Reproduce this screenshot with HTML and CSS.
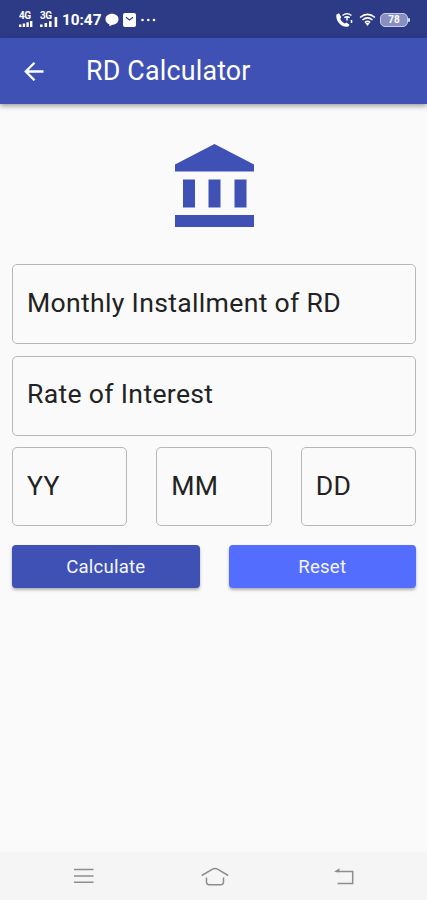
FILE: index.html
```html
<!DOCTYPE html>
<html lang="en">
<head>
<meta charset="utf-8">
<title>RD Calculator</title>
<link rel="stylesheet" href="styles.css">
</head>
<body>
<div class="screen">
  <div class="status">
    <div class="signal signal-4g">
      <span class="net">4G</span>
      <svg width="14" height="6" viewBox="0 0 14 6"><path d="M0 3.5h2.400V6H0zM3.700 2.500h2.400V6h-2.400zM7.400 1.200h2.400V6h-2.400zM11 0h2.400v6h-2.400z"/></svg>
    </div>
    <div class="signal signal-3g">
      <span class="net">3G</span>
      <svg width="18" height="10" viewBox="0 0 18 10"><path d="M0 7.500h2.600V10H0zM4.500 6h2.600v4H4.500zM9 4.300h2.600V10H9zM14.600 0h2.600v10h-2.600z"/></svg>
    </div>
    <span class="time">10:47</span>
    <svg class="bubble" width="14" height="14" viewBox="0 0 14 14"><path d="M7 .8c3.700 0 6.500 2.300 6.500 5.500S10.700 11.800 7.400 11.800L4.500 13.300 4.300 11.300C2 10.400.5 8.500.5 6.300.5 3.100 3.300.8 7 .8z"/></svg>
    <svg class="mail" width="13" height="14" viewBox="0 0 13 14"><rect width="13" height="14" rx="2"/><path class="flap" d="M3 4.200 6.500 7 10 4.200"/></svg>
    <svg class="dots" width="15" height="4" viewBox="0 0 15 4"><circle cx="1.500" cy="2" r="1.300"/><circle cx="7.300" cy="2" r="1.300"/><circle cx="13" cy="2" r="1.300"/></svg>
    <div class="status-right">
      <svg width="18" height="16" viewBox="0 0 18 16"><path d="M.5 2.500 3 1.300 5.300 5.200 4.200 6.800C5 9 6.500 10.500 8.800 11.500L10.500 10.500 13.500 12.700 12.300 14.500C6.500 16.500-1 9 .5 2.500z"/><path class="wave" d="M6.500 3.500Q11 .2 15.500 3.500M8.300 5.700Q11 3.900 13.700 5.700M11 5.500V8.500M15.500 8V11"/></svg>
      <svg width="17" height="14" viewBox="0 0 17 14"><path class="wave" d="M1 4.500Q8.500-1.800 16 4.500M3.500 7Q8.500 2.800 13.500 7M5.800 9.500Q8.500 7.200 11.200 9.500"/><path d="M6.300 10h4.400L8.500 13z"/></svg>
      <div class="battery"><span>78</span></div>
    </div>
  </div>
  <header class="appbar">
    <svg width="21" height="20" viewBox="0 0 21 20"><path d="M19.500 10.500H2M10.500 1.700 1.800 10.500l8.700 8.800"/></svg>
    <h1>RD Calculator</h1>
  </header>
  <main>
    <svg class="bank" width="80" height="84" viewBox="0 0 80 84"><path d="M0 20.500 39.500 0 79 20.500V27.500H0zM8 35.500H20V63.500H8zM33.500 35.500H45.500V63.500H33.500zM59.500 35.500H71.500V63.500H59.500zM0 71H79V83H0z"/></svg>
    <div class="field">Monthly Installment of RD</div>
    <div class="field">Rate of Interest</div>
    <div class="period">
      <div class="field">YY</div>
      <div class="field">MM</div>
      <div class="field">DD</div>
    </div>
    <div class="actions">
      <button class="calculate">Calculate</button>
      <button class="reset">Reset</button>
    </div>
  </main>
  <nav>
    <svg width="20" height="16" viewBox="0 0 20 16"><path d="M0 1.500H19.500M0 8H19.500M0 14.300H19.500"/></svg>
    <svg width="28" height="19" viewBox="0 0 28 19"><path d="M.8 8.500 11.500 2.200Q14 .8 16.500 2.200L27.200 8.500M5.500 10.500V15Q5.500 17.700 8 17.700H20Q22.500 17.700 22.500 15V10.500"/></svg>
    <svg width="20" height="17" viewBox="0 0 20 17"><path d="M2 3.500H18.700V15.500H3.500"/><path class="tip" d="M0 3.700 5.500.3V4.200z"/></svg>
  </nav>
</div>
</body>
</html>
```
FILE: styles.css
```css
* { box-sizing: border-box; }

body {
  margin: 0;
  font-family: Roboto, "Liberation Sans", sans-serif;
  background: #fafafa;
}

svg { display: block; flex: none; }

.screen {
  display: flex;
  flex-direction: column;
  width: 427px;
  height: 900px;
  overflow: hidden;
}

.status {
  display: flex;
  align-items: center;
  height: 38px;
  padding: 1px 17px 0 19px;
  background: #2d3b87;
  color: #fff;
  fill: #fff;
}

.signal {
  display: flex;
  flex-direction: column;
  height: 15px;
  justify-content: space-between;
}

.signal-4g { width: 14px; margin-right: 7px; }
.signal-3g { width: 18px; margin-right: 4px; }
.signal-3g svg { margin-top: -3px; }

.net {
  font-size: 10px;
  line-height: 8px;
  font-weight: 700;
  letter-spacing: -0.4px;
}

.time {
  width: 40px;
  font-size: 15.3px;
  font-weight: 700;
  line-height: 18px;
  white-space: nowrap;
}

.bubble { margin-left: 3px; }
.mail { margin-left: 4px; }
.dots { margin-left: 5px; }
.flap { fill: none; stroke: #2d3b87; stroke-width: 1.1; }
.wave { fill: none; stroke: #fff; stroke-width: 1.5; }

.status-right {
  display: flex;
  align-items: center;
  gap: 5px;
  margin-left: auto;
  margin-right: 2px;
}

.battery {
  position: relative;
  width: 28px;
  height: 14px;
  margin-left: -1px;
  border: 1.5px solid #c5cae5;
  border-radius: 5px;
  background: #8790c0;
  font-size: 10px;
  line-height: 12px;
  font-weight: 700;
  text-align: center;
}

.battery::after {
  content: "";
  position: absolute;
  right: -3px;
  top: 4px;
  width: 2px;
  height: 4px;
  border-radius: 1px;
  background: #d5d9ee;
}

.appbar {
  display: flex;
  align-items: center;
  height: 66px;
  padding-left: 24px;
  background: #3f51b5;
  color: #fff;
  box-shadow: 0 2px 5px rgba(0, 0, 0, 0.38);
  z-index: 1;
}

.appbar path { fill: none; stroke: #fff; stroke-width: 2.3; }

h1 {
  margin: 0 0 0 41px;
  font-size: 26.8px;
  font-weight: 400;
  line-height: 32px;
  letter-spacing: 0.2px;
  white-space: nowrap;
}

main {
  display: flex;
  flex: 1;
  flex-direction: column;
  padding: 40px 11px 0 12px;
}

.bank { margin: 0 0 36px 162.5px; fill: #3f51b5; }

.field {
  height: 80px;
  margin-bottom: 11.5px;
  padding: 21.5px 0 0 14px;
  border: 1.3px solid #b7b7b7;
  border-radius: 5px;
  color: #222;
  font-size: 26.6px;
  line-height: 32px;
  letter-spacing: 0.32px;
  white-space: nowrap;
}

.period { display: grid; grid-template-columns: repeat(3, 1fr); gap: 29px; }
.period .field { height: 79px; margin-bottom: 19px; }
.actions { display: grid; grid-template-columns: 1fr 1fr; gap: 29px; }

button {
  height: 43px;
  padding: 1px 0 0;
  border: 0;
  border-radius: 4px;
  color: #f5f6ff;
  font: 400 18.6px/42px Roboto, "Liberation Sans", sans-serif;
  letter-spacing: 0.2px;
  box-shadow: 0 2px 3px rgba(0, 0, 0, 0.3);
}

.calculate { background: #3f51b5; }
.reset { background: #536dfe; }

nav {
  display: flex;
  align-items: center;
  height: 48px;
  padding-left: 74px;
  background: #f5f5f5;
}

nav svg { margin-right: 107px; }
nav svg + svg { margin-right: 105px; }
nav svg + svg + svg { margin-right: 0; }
nav path { fill: none; stroke: #8e8e8e; stroke-width: 1.5; }
nav .tip { fill: #8e8e8e; stroke: none; }
```
